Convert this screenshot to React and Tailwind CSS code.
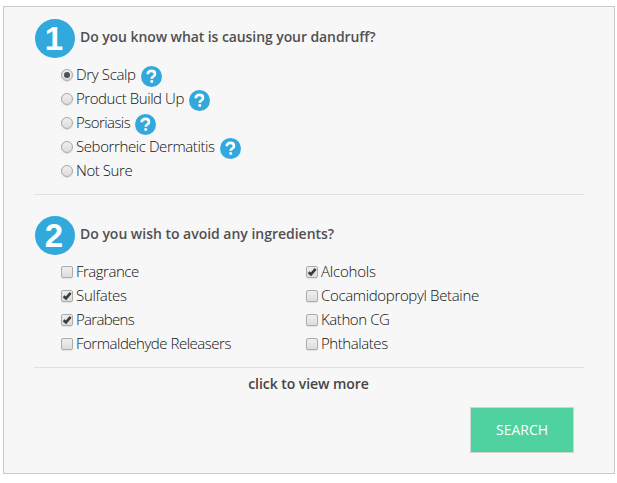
import React from 'react';

const causes = [
  { label: 'Dry Scalp', checked: true, help: true, tracking: 'tracking-[-0.35px]' },
  { label: 'Product Build Up', help: true, tracking: 'tracking-[-0.43px]' },
  { label: 'Psoriasis', help: true, tracking: 'tracking-[-0.55px]' },
  { label: 'Seborrheic Dermatitis', help: true, tracking: 'tracking-[-0.4px]' },
  { label: 'Not Sure', tracking: 'tracking-[-0.43px]' },
];

const ingredients = [
  [
    { label: 'Fragrance', tracking: 'tracking-[-0.5px]' },
    { label: 'Sulfates', checked: true, tracking: 'tracking-[-0.3px]' },
    { label: 'Parabens', checked: true, tracking: 'tracking-[-0.7px]' },
    { label: 'Formaldehyde Releasers', tracking: 'tracking-[-0.48px]' },
  ],
  [
    { label: 'Alcohols', checked: true, tracking: 'tracking-[-0.2px]' },
    { label: 'Cocamidopropyl Betaine', tracking: 'tracking-[-0.34px]' },
    { label: 'Kathon CG', tracking: 'tracking-[-0.42px]' },
    { label: 'Phthalates', tracking: 'tracking-[-0.43px]' },
  ],
];

const StepHeading = ({ number, children, tracking }) => (
  <div className="flex items-center h-10 pl-px">
    <span className="flex items-center justify-center w-10 h-[39px] rounded-[50%] bg-[#31a9dd] text-white font-bold text-[33px] leading-none font-['Liberation_Sans',sans-serif]">
      <span className="-ml-[2px]">{number}</span>
    </span>
    <h2 className={`ml-[5px] pb-[2px] text-[14px] leading-6 font-semibold text-[#505050] whitespace-nowrap ${tracking}`}>{children}</h2>
  </div>
);

const HelpIcon = () => (
  <svg className="ml-[5px] mt-[3px] shrink-0" width="21" height="21" viewBox="0 0 21 21">
    <circle cx="10.5" cy="10.5" r="10.5" fill="#31a9dd" />
    <path d="M6.7 8.2C6.7 5.9 8.3 4.9 10.4 4.9s3.6 1.1 3.6 3c0 2.7-3.3 2.4-3.3 4.9" fill="none" stroke="#fff" strokeWidth="2.6" />
    <rect x="9.4" y="14.2" width="2.7" height="2.5" fill="#fff" />
  </svg>
);

const Radio = ({ checked }) => (
  <span className="flex items-center justify-center w-3 h-3 rounded-full border border-[#a6a6a6] bg-linear-to-b from-[#eeeeee] to-[#dcdcdc] shadow-[0_1px_1px_#e2e2e2]">
    {checked && <span className="w-[6px] h-[6px] rounded-full bg-[#505058]" />}
  </span>
);

const Checkbox = ({ checked }) => (
  <span className="flex items-center justify-center w-3 h-3 rounded-[2px] border border-[#acacac] bg-linear-to-b from-[#eeeeee] to-[#dddddd] shadow-[0_1px_1px_#e2e2e2]">
    {checked && (
      <svg width="10" height="10" viewBox="0 0 10 10" className="shrink-0">
        <path d="M1.6 5.2 4 7.4 8.6 1.8" fill="none" stroke="#3c3c3c" strokeWidth="2.6" />
      </svg>
    )}
  </span>
);

const Option = ({ item, children }) => (
  <div className="flex items-center h-6">
    {children}
    <span className={`ml-[3px] pb-[2px] text-[15px] leading-6 font-light text-[#101010] whitespace-nowrap ${item.tracking}`}>{item.label}</span>
    {item.help && <HelpIcon />}
  </div>
);

export default function App() {
  return (
    <div className="w-[617px] h-[483px] bg-white pt-[6px] pl-[3px] overflow-hidden font-['Open_Sans',sans-serif]">
      <div className="w-[612px] h-[468px] bg-[#f7f7f7] border border-[#c8c8c8] pt-[11px] px-[30px]">
        {/* Step 1 */}
        <StepHeading number="1" tracking="tracking-[-0.08px]">Do you know what is causing your dandruff?</StepHeading>
        <div className="pl-[27px] mt-[5px]">
          {causes.map((item) => (
            <Option key={item.label} item={item}>
              <Radio checked={item.checked} />
            </Option>
          ))}
        </div>

        <div className="mt-[11px] border-t border-[#e1e1e1]" />

        {/* Step 2 */}
        <div className="mt-5">
          <StepHeading number="2" tracking="tracking-[-0.02px]">Do you wish to avoid any ingredients?</StepHeading>
        </div>
        <div className="flex pl-[27px] mt-[5px]">
          {ingredients.map((column, i) => (
            <div key={i} className="w-[245px]">
              {column.map((item) => (
                <Option key={item.label} item={item}>
                  <Checkbox checked={item.checked} />
                </Option>
              ))}
            </div>
          ))}
        </div>

        <div className="mt-[11px] border-t border-[#e1e1e1]" />
        <p className="mt-1 pr-px text-center text-[14px] leading-6 font-semibold text-[#444444] tracking-[-0.05px]">click to view more</p>

        <div className="flex justify-end mt-[11px] pr-[10px]">
          <button className="w-[104px] h-[46px] bg-[#50d1a0] border border-[#cfd6d2] text-white text-[14px] pb-[2px]">SEARCH</button>
        </div>
      </div>
    </div>
  );
}
